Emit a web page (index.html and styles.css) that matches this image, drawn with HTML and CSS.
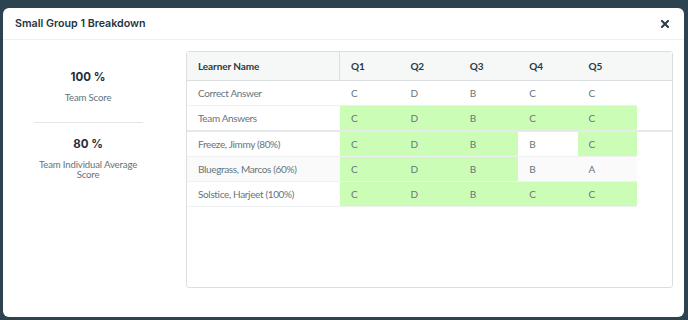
FILE: index.html
```html
<!DOCTYPE html>
<html>
<head>
<meta charset="utf-8">
<link rel="stylesheet" href="styles.css">
</head>
<body>
<div class="modal">
  <div class="modal-header">
    <div class="title">Small Group 1 Breakdown</div>
    <svg class="close" width="8" height="8" viewBox="0 0 8 8"><path d="M1 1L7 7M7 1L1 7" stroke="#2b3b45" stroke-width="2" stroke-linecap="square"/></svg>
  </div>
  <div class="modal-body">
    <div class="stats">
      <div class="stat-value">100 %</div>
      <div class="stat-label">Team Score</div>
      <div class="stat-sep"></div>
      <div class="stat-value second">80 %</div>
      <div class="stat-label multi">Team Individual Average Score</div>
    </div>
    <div class="tbl">
      <div class="row head">
        <div class="c name">Learner Name</div>
        <div class="c">Q1</div><div class="c">Q2</div><div class="c">Q3</div><div class="c">Q4</div><div class="c">Q5</div><div class="c tail"></div>
      </div>
      <div class="row correct">
        <div class="c name">Correct Answer</div>
        <div class="c">C</div><div class="c">D</div><div class="c">B</div><div class="c">C</div><div class="c">C</div><div class="c tail"></div>
      </div>
      <div class="row team">
        <div class="c name">Team Answers</div>
        <div class="c g">C</div><div class="c g">D</div><div class="c g">B</div><div class="c g">C</div><div class="c g">C</div><div class="c tail"></div>
      </div>
      <div class="row learner">
        <div class="c name">Freeze, Jimmy (80%)</div>
        <div class="c g">C</div><div class="c g">D</div><div class="c g">B</div><div class="c">B</div><div class="c g">C</div><div class="c tail"></div>
      </div>
      <div class="row learner odd">
        <div class="c name">Bluegrass, Marcos (60%)</div>
        <div class="c g">C</div><div class="c g">D</div><div class="c g">B</div><div class="c">B</div><div class="c">A</div><div class="c tail"></div>
      </div>
      <div class="row learner">
        <div class="c name">Solstice, Harjeet (100%)</div>
        <div class="c g">C</div><div class="c g">D</div><div class="c g">B</div><div class="c g">C</div><div class="c g">C</div><div class="c tail"></div>
      </div>
    </div>
  </div>
</div>
</body>
</html>
```
FILE: styles.css
```css
html, body {
  margin: 0;
  padding: 0;
  background: #2d4450;
  width: 688px;
  height: 320px;
  overflow: hidden;
}
.modal {
  margin: 8px 0 0 3px;
  width: 681px;
  height: 309px;
  background: #ffffff;
  border-radius: 6px;
  box-sizing: border-box;
}
.modal-header {
  height: 32px;
  border-bottom: 1px solid #eef0f1;
  box-sizing: border-box;
  display: flex;
  align-items: center;
  justify-content: space-between;
  padding: 0 15px 0 12px;
}
.title {
  font-family: "Inter", sans-serif;
  font-weight: 600;
  font-size: 10.7px;
  color: #26363f;
}
.close {
  display: block;
  margin-top: 1px;
}
.modal-body {
  display: flex;
  padding: 11px 11px 0 0;
}
.stats {
  width: 170px;
  display: flex;
  flex-direction: column;
  align-items: center;
  padding-top: 18px;
  font-family: "Lato", sans-serif;
}
.stat-value {
  font-family: "Inter", sans-serif;
  font-weight: 700;
  font-size: 11.5px;
  line-height: 16px;
  color: #1f2f38;
}
.stat-value.second {
  margin-top: 13px;
}
.stat-label {
  margin-top: 6px;
  font-size: 9.6px;
  letter-spacing: -0.15px;
  line-height: 14px;
  color: #62737c;
  text-align: center;
}
.stat-label.multi {
  width: 110px;
  line-height: 10px;
  margin-top: 8px;
}
.stat-sep {
  width: 109px;
  height: 1px;
  background: #e3e6e8;
  margin-top: 17px;
}
.tbl {
  margin-left: 13px;
  flex: 1;
  height: 237px;
  border: 1px solid #dcdfe2;
  border-radius: 3px;
  box-sizing: border-box;
  font-family: "Lato", sans-serif;
  font-size: 10px;
  letter-spacing: -0.35px;
  color: #67757d;
}
.row {
  display: grid;
  grid-template-columns: 153px repeat(5, 59.4px) 1fr;
  height: 25px;
  box-sizing: border-box;
}
.c {
  display: flex;
  align-items: center;
  padding-left: 11px;
  box-sizing: border-box;
}
.head {
  height: 29px;
  background: #f6f7f7;
  border-bottom: 1px solid #dcdfe2;
  font-weight: 700;
  letter-spacing: -0.1px;
  color: #2a3a43;
}
.head .name {
  border-right: 1px solid #dcdfe2;
}
.correct .c:not(.tail) {
  border-bottom: 1px solid #eef0f1;
}
.team {
  height: 26px;
  border-bottom: 2px solid #e6e9ea;
}
.learner .c:not(.tail) {
  border-bottom: 1px solid #eef0f1;
}
.learner.odd .c:not(.tail):not(.g) {
  background: #fafafa;
}
.g {
  background: #ccfdb7;
}
```
